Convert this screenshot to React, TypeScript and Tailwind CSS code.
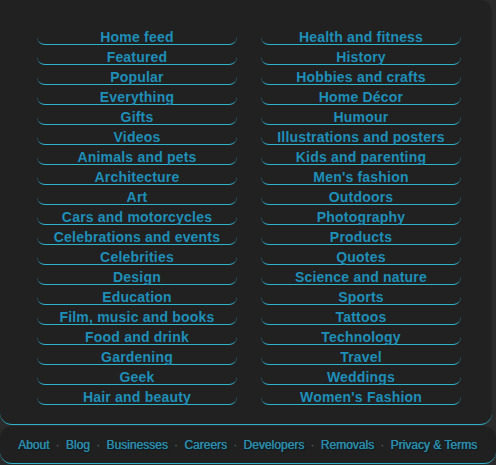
const leftLinks = [
  'Home feed',
  'Featured',
  'Popular',
  'Everything',
  'Gifts',
  'Videos',
  'Animals and pets',
  'Architecture',
  'Art',
  'Cars and motorcycles',
  'Celebrations and events',
  'Celebrities',
  'Design',
  'Education',
  'Film, music and books',
  'Food and drink',
  'Gardening',
  'Geek',
  'Hair and beauty',
];

const rightLinks = [
  'Health and fitness',
  'History',
  'Hobbies and crafts',
  'Home Décor',
  'Humour',
  'Illustrations and posters',
  'Kids and parenting',
  "Men's fashion",
  'Outdoors',
  'Photography',
  'Products',
  'Quotes',
  'Science and nature',
  'Sports',
  'Tattoos',
  'Technology',
  'Travel',
  'Weddings',
  "Women's Fashion",
];

const footerLinks = ['About', 'Blog', 'Businesses', 'Careers', 'Developers', 'Removals', 'Privacy & Terms'];

const CategoryColumn = ({ items }: { items: string[] }) => (
  <ul className="flex flex-col gap-[3px] w-[200px]">
    {items.map((label) => (
      <li key={label}>
        <a
          href="#"
          className="block h-[17px] pt-[1px] leading-[16px] text-center text-[14px] font-bold tracking-[0.2px] text-[#1d8fb9] border-b border-[#2cb4cc] rounded-b-[8px] whitespace-nowrap"
        >
          {label}
        </a>
      </li>
    ))}
  </ul>
);

export default function App() {
  return (
    <div className="w-[496px] h-[465px] bg-[#2a2a2a] overflow-hidden font-['Liberation_Sans',Arial,sans-serif]">
      <div className="bg-[#212121] border-b border-[#2cb4cc] rounded-b-[12px] rounded-tr-[12px] mr-[4px] pt-[28px] pb-[19px]">
        <div className="flex gap-[24px] pl-[37px]">
          <CategoryColumn items={leftLinks} />
          <CategoryColumn items={rightLinks} />
        </div>
      </div>
      <div className="mt-[1px] h-[38px] bg-[#202020] border-b border-[#2cb4cc] rounded-[12px] flex items-center pl-[18px] gap-[6.25px] text-[12px]">
        {footerLinks.map((label, i) => (
          <span key={label} className="flex items-center gap-[6.25px]">
            {i > 0 && <span className="text-[#5a6a70]">·</span>}
            <a
              href="#"
              className="text-[#2b8cab] [text-shadow:0.4px_0_0_#2b8cab,1px_1px_1px_#071c24] whitespace-nowrap"
            >
              {label}
            </a>
          </span>
        ))}
      </div>
    </div>
  );
}
